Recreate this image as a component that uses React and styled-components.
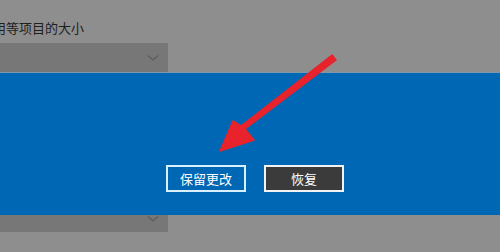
import styled, { createGlobalStyle } from "styled-components";

const GlobalStyle = createGlobalStyle`
  html, body {
    margin: 0;
    padding: 0;
    background: #8e8e8e;
  }
  body {
    font-family: "Noto Sans CJK SC", "Noto Sans", sans-serif;
  }
`;

export default function App() {
    return (
        <Page>
            <GlobalStyle />
            <TopSection>
                <Label>用等项目的大小</Label>
                <Select height={29}>
                    <Chevron />
                </Select>
            </TopSection>
            <Band>
                <ButtonRow>
                    <Button>保留更改</Button>
                    <Button dark>恢复</Button>
                </ButtonRow>
            </Band>
            <Select height={17} bottom>
                <Chevron />
            </Select>
            <Arrow width="500" height="252" viewBox="0 0 500 252">
                <polygon
                    points="332,55 336,60 245,129 254,140 220,151 233,121 241,126"
                    fill="#e8232b"
                    stroke="#e8232b"
                    strokeWidth="1.5"
                    strokeLinejoin="round"
                />
            </Arrow>
        </Page>
    );
}

const Chevron = () => (
    <ChevronIcon width="12" height="8" viewBox="0 0 12 8">
        <polyline points="1,1.5 6,6 11,1.5" fill="none" stroke="#5c5c5c" strokeWidth="1.2" />
    </ChevronIcon>
);

const Page = styled.div`
  position: relative;
  width: 500px;
  height: 252px;
  overflow: hidden;
  background: #8e8e8e;
`;

const TopSection = styled.div`
  padding-top: 20px;
  display: flex;
  flex-direction: column;
`;

const Label = styled.div`
  margin-left: -7px;
  font-size: 13px;
  line-height: 16px;
  color: #1e1e1e;
  margin-bottom: 7px;
  white-space: nowrap;
`;

const Select = styled.div`
  width: 168px;
  height: ${props => props.height}px;
  background: #777777;
  display: flex;
  align-items: ${props => (props.bottom ? "flex-start" : "center")};
  justify-content: flex-end;
  padding-right: 9px;
  box-sizing: border-box;
`;

const ChevronIcon = styled.svg`
  display: block;
`;

const Band = styled.div`
  height: 143px;
  background: #0067b4;
  border-top: 1px solid #7d98ad;
  box-sizing: border-box;
  padding-top: 92px;
`;

const ButtonRow = styled.div`
  display: flex;
  gap: 18px;
  padding-left: 166px;
`;

const Button = styled.div`
  width: 80px;
  height: 27px;
  box-sizing: border-box;
  border: 2px solid ${props => (props.dark ? "#f2f2f2" : "#d9f1ff")};
  background: ${props => (props.dark ? "#3b3b3b" : "#0067b4")};
  color: #ffffff;
  font-size: 13px;
  display: flex;
  align-items: center;
  justify-content: center;
`;

const Arrow = styled.svg`
  position: absolute;
  left: 0;
  top: 0;
  pointer-events: none;
`;
